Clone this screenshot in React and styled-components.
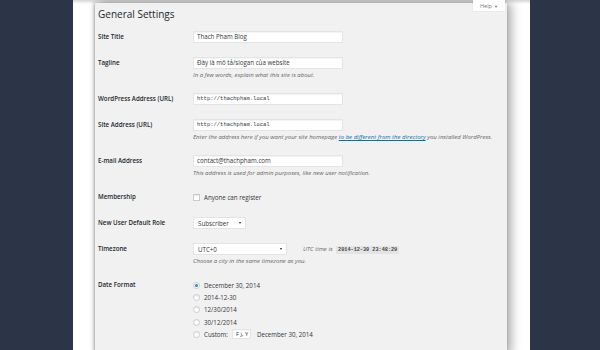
import React from "react";
import styled, { createGlobalStyle } from "styled-components";

const GlobalStyle = createGlobalStyle`
  html, body {
    margin: 0;
    padding: 0;
  }
  body {
    font-family: "Open Sans", "Liberation Sans", sans-serif;
    background: #2c3547;
  }
`;

const Page = styled.div`
  width: 600px;
  height: 350px;
  background: #2c3547;
  display: grid;
  grid-template-columns: 73px 457px 1fr;
  overflow: hidden;
`;

const Frame = styled.div`
  grid-column: 2;
  background: #fff;
  padding: 3px 23px 0 22px;
  overflow: hidden;
  background-image: linear-gradient(to bottom, #d6d6d6, #fff 4px);
`;

const Window = styled.div`
  position: relative;
  height: 100%;
  background: #f1f1f1;
  padding: 4px 0 0 3px;
  box-shadow: 4px 0 10px rgba(0, 0, 0, 0.35), -1px 0 3px rgba(0, 0, 0, 0.3);
  color: #23282d;
`;

const HelpTab = styled.div`
  position: absolute;
  top: -3px;
  right: 2px;
  width: 32px;
  height: 11px;
  background: #fff;
  box-shadow: 0 0 1px rgba(0, 0, 0, 0.15);
  font-size: 5.5px;
  color: #777;
  display: flex;
  align-items: center;
  justify-content: center;
  gap: 2px;
  padding-top: 1px;
  box-sizing: border-box;
`;

const Title = styled.h1`
  margin: 0;
  font-size: 10px;
  line-height: 14px;
  font-weight: 400;
  color: #23282d;
`;

const Form = styled.div`
  display: flex;
  flex-direction: column;
  margin-top: 3px;
`;

const Row = styled.div`
  display: grid;
  grid-template-columns: 95px 1fr;
  padding: 7px 0;
`;

const Label = styled.div`
  font-size: 6.2px;
  line-height: 12px;
  font-weight: 600;
  color: #23282d;
`;

const Field = styled.div`
  display: flex;
  flex-direction: column;
  align-items: flex-start;
`;

const Line = styled.div`
  display: flex;
  align-items: center;
  height: 12px;
  gap: ${(p) => p.$gap || 0}px;
`;

const TextInput = styled.div`
  box-sizing: border-box;
  width: ${(p) => p.$w || 150}px;
  height: 12px;
  padding: 0 3px;
  background: #fff;
  border: 1px solid #e4e4e4;
  box-shadow: inset 0 1px 1px rgba(0, 0, 0, 0.05);
  font-family: ${(p) =>
    p.$mono ? '"Liberation Mono", "DejaVu Sans Mono", monospace' : '"Open Sans", sans-serif'};
  font-size: ${(p) => (p.$mono ? "5.5px" : "6.2px")};
  line-height: 10px;
  color: #32373c;
  white-space: nowrap;
`;

const Help = styled.p`
  margin: 2px 0 0;
  font-size: 6px;
  line-height: 8px;
  font-style: italic;
  color: #666;
  white-space: nowrap;
  a {
    color: #0073aa;
    text-decoration: underline;
  }
`;

const Select = styled.div`
  box-sizing: border-box;
  width: ${(p) => p.$w}px;
  height: 12px;
  padding: 0 4px;
  background: #fff;
  border: 1px solid #e4e4e4;
  display: flex;
  align-items: center;
  justify-content: space-between;
  font-size: 6.2px;
  color: #32373c;
  &::after {
    content: "";
    border-left: 1.5px solid transparent;
    border-right: 1.5px solid transparent;
    border-top: 2.5px solid #222;
  }
`;

const Check = styled.span`
  box-sizing: border-box;
  width: 7px;
  height: 7px;
  background: #fff;
  border: 1px solid #c8cbcf;
  box-shadow: inset 0 1px 1px rgba(0, 0, 0, 0.08);
  border-radius: ${(p) => (p.$round ? "50%" : "0")};
  display: flex;
  align-items: center;
  justify-content: center;
  &::before {
    content: "";
    display: ${(p) => (p.$on ? "block" : "none")};
    width: 3px;
    height: 3px;
    border-radius: 50%;
    background: #1e8cbe;
  }
`;

const Text = styled.span`
  font-size: 6.2px;
  color: #32373c;
  font-style: ${(p) => (p.$italic ? "italic" : "normal")};
  ${(p) => p.$italic && "color: #666; font-size: 6px;"}
`;

const Code = styled.code`
  font-family: "Liberation Mono", "DejaVu Sans Mono", monospace;
  font-style: normal;
  font-size: 5.2px;
  font-weight: 700;
  background: #e4e4e4;
  color: #444;
  padding: 1px 2px;
  margin-left: 2px;
`;

const Radios = styled.div`
  display: flex;
  flex-direction: column;
`;

const RadioLine = styled.div`
  display: flex;
  align-items: center;
  gap: 4px;
  height: 12.3px;
`;

const SmallInput = styled(TextInput)`
  height: 10px;
  font-family: "Open Sans", sans-serif;
  font-size: 5.8px;
  line-height: 8px;
  margin-right: 2px;
`;

const dateFormats = ["December 30, 2014", "2014-12-30", "12/30/2014", "30/12/2014"];

export default function App() {
  return (
    <>
      <GlobalStyle />
      <Page>
        <Frame>
          <Window>
            <HelpTab>
              Help <span style={{ fontSize: "4px" }}>▼</span>
            </HelpTab>
            <Title>General Settings</Title>
            <Form>
              <Row>
                <Label>Site Title</Label>
                <Field>
                  <TextInput>Thach Pham Blog</TextInput>
                </Field>
              </Row>
              <Row>
                <Label>Tagline</Label>
                <Field>
                  <TextInput>Đây là mô tả/slogan của website</TextInput>
                  <Help>In a few words, explain what this site is about.</Help>
                </Field>
              </Row>
              <Row>
                <Label>WordPress Address (URL)</Label>
                <Field>
                  <TextInput $mono>http://thachpham.local</TextInput>
                </Field>
              </Row>
              <Row>
                <Label>Site Address (URL)</Label>
                <Field>
                  <TextInput $mono>http://thachpham.local</TextInput>
                  <Help>
                    Enter the address here if you want your site homepage{" "}
                    <a>to be different from the directory</a> you installed WordPress.
                  </Help>
                </Field>
              </Row>
              <Row>
                <Label>E-mail Address</Label>
                <Field>
                  <TextInput>contact@thachpham.com</TextInput>
                  <Help>This address is used for admin purposes, like new user notification.</Help>
                </Field>
              </Row>
              <Row>
                <Label>Membership</Label>
                <Field>
                  <Line $gap={4}>
                    <Check />
                    <Text>Anyone can register</Text>
                  </Line>
                </Field>
              </Row>
              <Row>
                <Label>New User Default Role</Label>
                <Field>
                  <Select $w={53}>Subscriber</Select>
                </Field>
              </Row>
              <Row>
                <Label>Timezone</Label>
                <Field>
                  <Line $gap={16}>
                    <Select $w={94}>UTC+0</Select>
                    <Text $italic>
                      UTC time is <Code>2014-12-30 23:48:29</Code>
                    </Text>
                  </Line>
                  <Help>Choose a city in the same timezone as you.</Help>
                </Field>
              </Row>
              <Row>
                <Label>Date Format</Label>
                <Radios>
                  {dateFormats.map((f, i) => (
                    <RadioLine key={f}>
                      <Check $round $on={i === 0} />
                      <Text>{f}</Text>
                    </RadioLine>
                  ))}
                  <RadioLine>
                    <Check $round />
                    <Text>Custom:</Text>
                    <SmallInput $w={19}>F j, Y</SmallInput>
                    <Text>December 30, 2014</Text>
                  </RadioLine>
                </Radios>
              </Row>
            </Form>
          </Window>
        </Frame>
      </Page>
    </>
  );
}
